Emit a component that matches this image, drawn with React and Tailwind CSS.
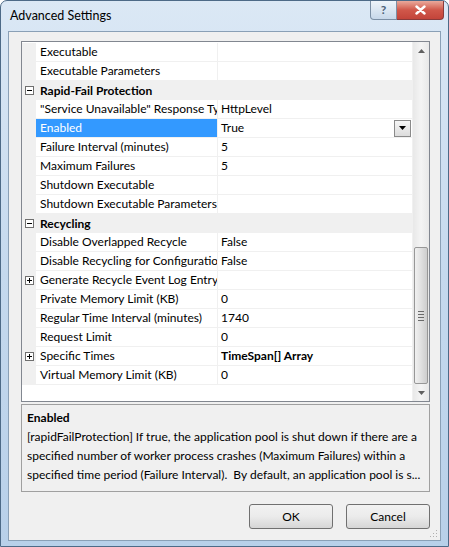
import React from 'react';

const rows = [
    { name: 'Executable', value: '' },
    { name: 'Executable Parameters', value: '' },
    { cat: 'Rapid-Fail Protection' },
    { name: '"Service Unavailable" Response Type', value: 'HttpLevel' },
    { name: 'Enabled', value: 'True', selected: true },
    { name: 'Failure Interval (minutes)', value: '5' },
    { name: 'Maximum Failures', value: '5' },
    { name: 'Shutdown Executable', value: '' },
    { name: 'Shutdown Executable Parameters', value: '' },
    { cat: 'Recycling' },
    { name: 'Disable Overlapped Recycle', value: 'False' },
    { name: 'Disable Recycling for Configuration Changes', value: 'False' },
    { name: 'Generate Recycle Event Log Entry', value: '', plus: true },
    { name: 'Private Memory Limit (KB)', value: '0' },
    { name: 'Regular Time Interval (minutes)', value: '1740' },
    { name: 'Request Limit', value: '0' },
    { name: 'Specific Times', value: 'TimeSpan[] Array', plus: true, bold: true },
    { name: 'Virtual Memory Limit (KB)', value: '0' },
];

const desc = [
    '[rapidFailProtection] If true, the application pool is shut down if there are a',
    'specified number of worker process crashes (Maximum Failures) within a',
    'specified time period (Failure Interval).\u00a0 By default, an application pool is s...',
];

const Box = ({ plus }) => (
    <div className="w-[9px] h-[9px] border border-[#6f6f6f] bg-white relative ml-[3px]">
        <div className="absolute left-[1px] top-[3px] w-[5px] h-px bg-black"></div>
        {plus && <div className="absolute left-[3px] top-[1px] w-px h-[5px] bg-black"></div>}
    </div>
);

const Row = ({ r }) => {
    if (r.cat) {
        return (
            <div className="flex items-center h-[19px] bg-[#f0f0f0]">
                <div className="w-[14px] flex items-center"><Box /></div>
                <div className="pl-[4px] font-bold text-black">{r.cat}</div>
            </div>
        );
    }
    return (
        <div className="flex h-[19px]">
            <div className="w-[14px] shrink-0 bg-[#f0f0f0] flex items-center">{r.plus && <Box plus />}</div>
            <div className={`w-[181px] shrink-0 pl-[4px] flex items-center overflow-hidden whitespace-nowrap border-b border-[#f0f0f0] ${r.selected ? 'bg-[#3399ff] text-white' : 'bg-white text-black'}`}>
                {r.name}
            </div>
            <div className="w-px shrink-0 bg-[#f0f0f0]"></div>
            <div className={`flex-1 pl-[3px] flex items-center justify-between border-b border-[#f0f0f0] bg-white ${r.bold ? 'font-bold' : ''}`}>
                <span>{r.value}</span>
                {r.selected && (
                    <div className="w-[17px] h-[17px] mr-[1px] border border-[#8a8a8a] bg-gradient-to-b from-[#f6f6f6] to-[#dcdcdc] flex items-center justify-center">
                        <svg width="7" height="4" viewBox="0 0 7 4"><path d="M0 0h7L3.5 4z" fill="#000" /></svg>
                    </div>
                )}
            </div>
        </div>
    );
};

const Scrollbar = () => (
    <div className="w-[17px] bg-gradient-to-r from-[#e8e8e8] via-[#f4f4f4] to-[#e8e8e8] flex flex-col border-l border-[#f0f0f0]">
        <div className="h-[17px] flex items-center justify-center">
            <svg width="7" height="4" viewBox="0 0 7 4"><path d="M0 4h7L3.5 0z" fill="#606060" /></svg>
        </div>
        <div className="h-[188px]"></div>
        <div className="h-[137px] mx-[1px] rounded-[2px] border border-[#979797] bg-gradient-to-r from-[#f0f0f0] via-[#e0e0e0] to-[#cdcdcd] flex flex-col items-center justify-center gap-[2px]">
            <div className="w-[6px] h-px bg-[#6a6a6a]"></div>
            <div className="w-[6px] h-px bg-[#6a6a6a]"></div>
            <div className="w-[6px] h-px bg-[#6a6a6a]"></div>
            <div className="w-[6px] h-px bg-[#6a6a6a]"></div>
        </div>
        <div className="flex-1 flex items-center justify-center">
            <svg width="7" height="4" viewBox="0 0 7 4"><path d="M0 0h7L3.5 4z" fill="#606060" /></svg>
        </div>
    </div>
);

export default function App() {
    return (
        <div className="w-[449px] h-[547px] overflow-hidden bg-white" style={{ fontFamily: 'Lato, "Noto Sans", sans-serif' }}>
            <div className="w-full h-full rounded-t-[7px] border border-[#4d6a87] bg-gradient-to-b from-[#dbe8f5] via-[#c5d9ee] to-[#b8d0e9] flex flex-col text-[12px] text-black">
                {/* title bar */}
                <div className="h-[30px] flex items-start justify-between pl-[9px] pr-[4px]">
                    <div className="pt-[6px] text-[12.5px] text-black">Advanced Settings</div>
                    <div className="flex">
                        <div className="w-[27px] h-[19px] rounded-bl-[4px] border border-[#7b8fa5] border-t-0 bg-gradient-to-b from-[#eef4fa] to-[#c7d8ea] flex items-center justify-center text-[12px] font-bold text-[#4b6078]">?</div>
                        <div className="w-[47px] h-[19px] rounded-br-[4px] border border-[#8a3a3a] border-t-0 border-l-0 bg-gradient-to-b from-[#e9a99c] via-[#d0574a] to-[#c3443a] flex items-center justify-center">
                            <svg width="11" height="10" viewBox="0 0 11 10"><path d="M1.5 1.5l8 7M9.5 1.5l-8 7" stroke="#fff" strokeWidth="2.4" strokeLinecap="round" /></svg>
                        </div>
                    </div>
                </div>
                {/* client */}
                <div className="flex-1 px-[7px] pb-[5px]">
                    <div className="h-full bg-[#f0f0f0] border border-[#8aa0b6] pt-[9px] pl-[12px] pr-[10px] flex flex-col relative">
                        <div className="h-[361px] border border-[#828790] bg-white flex">
                            <div className="flex-1 flex flex-col pt-px">
                                {rows.map((r, i) => <Row key={i} r={r} />)}
                            </div>
                            <Scrollbar />
                        </div>
                        <div className="mt-[2px] h-[88px] border border-[#a0a0a0] bg-[#f0f0f0] px-[5px] pt-[3px] leading-[19px] overflow-hidden">
                            <div className="font-bold">Enabled</div>
                            {desc.map((l, i) => <div key={i} className="whitespace-nowrap">{l}</div>)}
                        </div>
                        <div className="mt-[12px] flex justify-end gap-[13px]">
                            <button className="w-[84px] h-[25px] rounded-[3px] border border-[#707070] bg-gradient-to-b from-[#f2f2f2] via-[#ebebeb] to-[#d6d6d6] text-[12px]">OK</button>
                            <button className="w-[84px] h-[25px] rounded-[3px] border border-[#707070] bg-gradient-to-b from-[#f2f2f2] via-[#ebebeb] to-[#d6d6d6] text-[12px]">Cancel</button>
                        </div>
                        <svg className="absolute right-[2px] bottom-[2px]" width="10" height="10" viewBox="0 0 10 10">
                            <rect x="8" y="2" width="1" height="1" fill="#b0b0b0" />
                            <rect x="5" y="5" width="1" height="1" fill="#b0b0b0" />
                            <rect x="8" y="5" width="1" height="1" fill="#b0b0b0" />
                            <rect x="2" y="8" width="1" height="1" fill="#b0b0b0" />
                            <rect x="5" y="8" width="1" height="1" fill="#b0b0b0" />
                            <rect x="8" y="8" width="1" height="1" fill="#b0b0b0" />
                        </svg>
                    </div>
                </div>
            </div>
        </div>
    );
}
